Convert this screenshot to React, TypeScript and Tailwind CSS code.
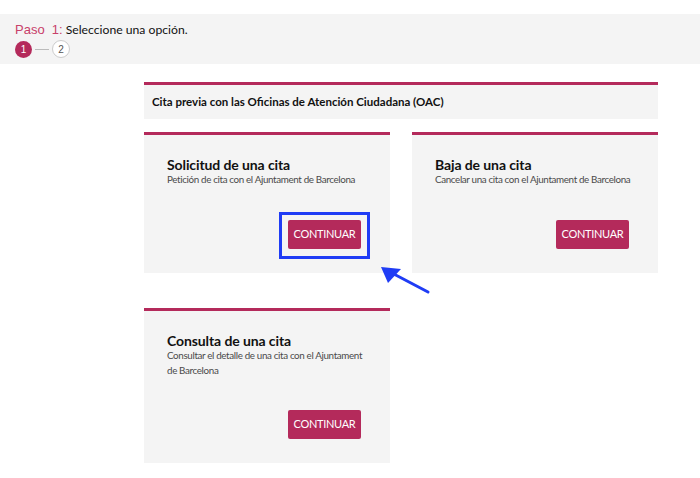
import React from "react";

const font = { fontFamily: "Lato, 'Open Sans', sans-serif" };

function Btn() {
  return (
    <button className="flex h-[29px] w-[73px] items-center justify-center rounded-[2px] bg-[#b42a5b] text-[11px] tracking-[-0.3px] text-white">
      CONTINUAR
    </button>
  );
}

function Card({
  title,
  children,
  height,
  btnGap,
  boxed,
}: {
  title: string;
  children: React.ReactNode;
  height: number;
  btnGap: string;
  boxed?: boolean;
}) {
  return (
    <div
      className="flex flex-col border-t-[3px] border-[#b42a5b] bg-[#f4f4f4] pl-[23px] pr-[29px] pt-[21px]"
      style={{ height }}
    >
      <div className="whitespace-nowrap text-[14px] font-bold leading-[18px] tracking-[-0.1px] text-[#111]">{title}</div>
      <div className="mt-[-2px] whitespace-nowrap text-[9.8px] leading-[15px] tracking-[-0.35px] text-[#4a4a4a]">{children}</div>
      <div className={`flex justify-end ${btnGap}`}>
        {boxed ? (
          <div className="mr-[-9px] border-[3px] border-[#1f3cf5] px-[6px] pb-[7px] pt-[5px]">
            <Btn />
          </div>
        ) : (
          <Btn />
        )}
      </div>
    </div>
  );
}

export default function App() {
  return (
    <div className="relative h-[478px] w-[700px] overflow-hidden bg-white" style={font}>
      <div className="mt-[14px] h-[50px] bg-[#f4f4f4] pl-[15px] pt-[8px]">
        <div className="flex items-baseline leading-[16px]">
          <span className="text-[13px] text-[#c8406a]" style={{ fontFamily: "'Liberation Sans', Arial, sans-serif" }}>
            Paso&nbsp;&nbsp;1:
          </span>
          <span className="ml-[3px] text-[12.2px] text-[#111]">Seleccione una opción.</span>
        </div>
        <div className="mt-[2px] flex items-center">
          <div
            className="flex h-[17px] w-[17px] items-center justify-center rounded-full bg-[#b42a5b] text-[10px] text-white"
            style={{ fontFamily: "'Liberation Sans', Arial, sans-serif" }}
          >
            1
          </div>
          <div className="mx-[3px] h-px w-[14px] bg-[#bbb]" />
          <div
            className="flex h-[18px] w-[18px] items-center justify-center rounded-full border border-[#ccc] bg-white text-[10px] text-[#555]"
            style={{ fontFamily: "'Liberation Sans', Arial, sans-serif" }}
          >
            2
          </div>
        </div>
      </div>

      <div className="ml-[144px] mt-[18px] w-[514px]">
        <div className="flex h-[37px] items-center border-t-[3px] border-[#b42a5b] bg-[#f4f4f4] pl-[8px] text-[11.5px] font-bold text-[#111]">
          Cita previa con las Oficinas de Atención Ciudadana (OAC)
        </div>
        <div className="mt-[13px] grid grid-cols-2 items-start gap-x-[22px] gap-y-[35px]">
          <Card title="Solicitud de una cita" height={141} btnGap="mt-[25px]" boxed>
            Petición de cita con el Ajuntament de Barcelona
          </Card>
          <Card title="Baja de una cita" height={141} btnGap="mt-[33px]">
            Cancelar una cita con el Ajuntament de Barcelona
          </Card>
          <Card title="Consulta de una cita" height={155} btnGap="mt-[32px]">
            Consultar el detalle de una cita con el Ajuntament
            <br />
            de Barcelona
          </Card>
        </div>
      </div>

      <svg className="absolute left-0 top-0" width="700" height="478" viewBox="0 0 700 478">
        <line x1="428" y1="292" x2="390" y2="272" stroke="#1f3cf5" strokeWidth="3" strokeLinecap="round" />
        <polygon points="381,267 401,269 388,283" fill="#1f3cf5" />
      </svg>
    </div>
  );
}
